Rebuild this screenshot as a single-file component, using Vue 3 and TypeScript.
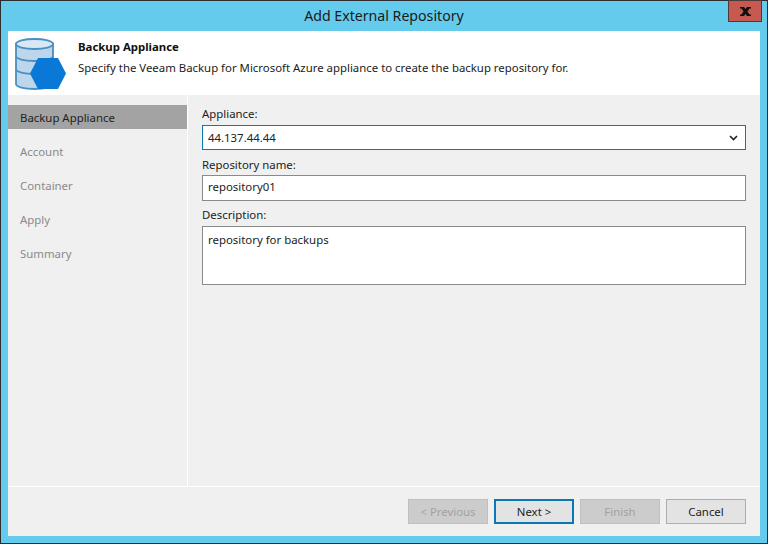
<script setup lang="ts">
const steps = ['Backup Appliance', 'Account', 'Container', 'Apply', 'Summary']
</script>

<template>
  <div class="window">
    <div class="titlebar">
      <span class="title">Add External Repository</span>
      <button class="close" aria-label="Close">
        <svg width="11" height="9" viewBox="0 0 11 9">
          <path d="M0 0h4l1.500 2 1.500-2h4v1.500H9.500L7.500 4.500l2 3H11V9H7L5.500 7 4 9H0V7.500h1.500l2-3-2-3H0z" fill="#111" />
        </svg>
      </button>
    </div>
    <div class="client">
      <header class="header">
        <svg class="logo" width="53" height="54" viewBox="0 0 53 54">
          <g stroke="#4a90c2" stroke-width="1.800" fill="#bdd6ec">
            <path d="M1 6v40c0 3 8 5 18.500 5s18.500-2 18.500-5V6z" />
            <path d="M1 18c0 3 8 5 18.500 5S38 21 38 18M1 31c0 3 8 5 18.500 5S38 34 38 31" fill="none" />
            <ellipse cx="19.500" cy="6" rx="18.500" ry="5" fill="#d9e8f4" />
          </g>
          <path d="M23 20h20l8 15.500L43 51H23l-8-15.500z" fill="#0a78d7" />
        </svg>
        <div class="heading">
          <div class="heading-title">Backup Appliance</div>
          <div class="heading-text">Specify the Veeam Backup for Microsoft Azure appliance to create the backup repository for.</div>
        </div>
      </header>
      <div class="body">
        <nav class="nav">
          <div v-for="(s, i) in steps" :key="s" class="step" :class="{ active: i === 0 }">{{ s }}</div>
        </nav>
        <main class="form">
          <label class="label">Appliance:</label>
          <div class="field select">
            <span>44.137.44.44</span>
            <svg width="9" height="6" viewBox="0 0 9 6"><path d="M1 1l3.500 3.500L8 1" fill="none" stroke="#222" stroke-width="1.600" /></svg>
          </div>
          <label class="label lower">Repository name:</label>
          <div class="field input">repository01</div>
          <label class="label">Description:</label>
          <div class="field area">repository for backups</div>
        </main>
      </div>
      <footer class="footer">
        <button class="btn disabled">&lt; Previous</button>
        <button class="btn focus">Next &gt;</button>
        <button class="btn disabled">Finish</button>
        <button class="btn">Cancel</button>
      </footer>
    </div>
  </div>
</template>

<style>
html, body { margin: 0; padding: 0; }
</style>

<style scoped>
.window {
  position: relative;
  box-sizing: border-box;
  width: 768px;
  height: 544px;
  display: flex;
  flex-direction: column;
  background: #65cbec;
  border: 1px solid #2d2d30;
  padding: 0 7px 7px;
  font-family: "Noto Sans", sans-serif;
  font-size: 11.400px;
  color: #222;
}
.titlebar { box-sizing: border-box; height: 30px; padding-bottom: 2px; display: flex; align-items: center; justify-content: center; flex: none; }
.title { font-size: 14.150px; color: #1a1a1a; }
.close {
  position: absolute;
  top: -1px;
  right: 5px;
  box-sizing: border-box;
  width: 34px;
  height: 22px;
  padding: 0;
  display: flex;
  align-items: center;
  justify-content: center;
  background: #c75a50;
  border: 1px solid #4a3a3a;
}
.client { flex: 1; display: flex; flex-direction: column; background: #f0f0f0; min-height: 0; }
.header { height: 64px; flex: none; background: #fff; display: flex; }
.logo { margin: 7px 0 0 7px; flex: none; }
.heading { margin-left: 10px; }
.heading-title { font-weight: 700; margin-top: 8px; line-height: 16px; color: #111; }
.heading-text { margin-top: 5px; line-height: 16px; }
.body { flex: 1; display: flex; min-height: 0; border-bottom: 1px solid #fff; }
.nav { width: 179px; flex: none; border-right: 1px solid #fff; padding-top: 10px; display: flex; flex-direction: column; gap: 10px; }
.step { height: 24px; line-height: 26px; padding-left: 12px; color: #8a8a8a; }
.step.active { background: #a3a3a3; color: #222; }
.form { flex: 1; padding: 10px 14px 0; display: flex; flex-direction: column; }
.label { height: 20px; line-height: 18px; }
.label.lower { line-height: 20px; }
.field { box-sizing: border-box; background: #fff; border: 1px solid #8a8a8a; padding: 0 5px; }
.select { height: 25px; border-color: #0a78b4; padding-right: 7px; display: flex; align-items: center; justify-content: space-between; margin-bottom: 5px; }
.input { height: 26px; line-height: 22px; margin-bottom: 5px; }
.area { height: 59px; padding-top: 4px; line-height: 18px; }
.footer { height: 49px; flex: none; box-sizing: border-box; display: flex; justify-content: flex-end; gap: 6px; padding: 12px 14px 0 0; }
.btn {
  box-sizing: border-box;
  width: 80px;
  height: 25px;
  padding: 0;
  font: inherit;
  color: #222;
  background: #e3e3e3;
  border: 1px solid #adadad;
}
.btn.disabled { background: #cccccc; border-color: #bfbfbf; color: #a5a0a0; }
.btn.focus { border: 2px solid #0a78b4; }
</style>
